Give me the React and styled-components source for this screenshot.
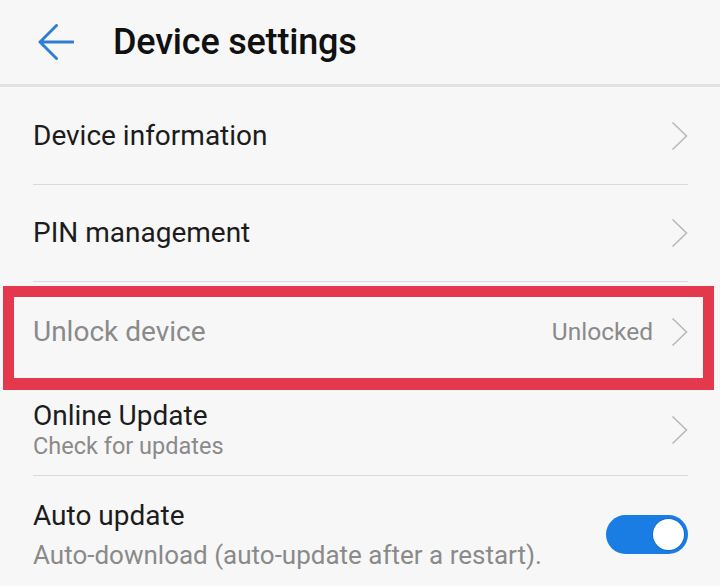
import React from 'react';
import styled, { createGlobalStyle } from 'styled-components';

const GlobalStyle = createGlobalStyle`
  html, body {
    margin: 0;
    padding: 0;
    background: #f7f7f7;
  }
  body {
    font-family: Roboto, "Noto Sans", "Liberation Sans", sans-serif;
    -webkit-font-smoothing: antialiased;
  }
`;

const StyledScreen = styled.div`
  width: 720px;
  height: 586px;
  overflow: hidden;
  background: #f7f7f7;
`;

const StyledHeader = styled.header`
  display: flex;
  align-items: center;
  height: 84px;
  padding-left: 38px;
  border-bottom: 3px solid #e2e2e2;
`;

const StyledBack = styled.button`
  display: flex;
  align-items: center;
  justify-content: center;
  width: 36px;
  height: 36px;
  padding: 0;
  border: 0;
  background: none;
  margin-right: 39px;
  cursor: pointer;
`;

const StyledTitle = styled.h1`
  margin: 0;
  font-size: 36px;
  font-weight: 500;
  color: #111;
  letter-spacing: -0.2px;
`;

const StyledRow = styled.div`
  display: flex;
  align-items: center;
  box-sizing: border-box;
  height: ${({ height }) => height}px;
  padding-top: ${({ top }) => top || 0}px;
  padding-bottom: ${({ bottom }) => bottom || 0}px;
  margin: 0 32px 0 33px;
  border-bottom: ${({ divider }) => (divider ? '1px solid #dadada' : 'none')};
`;

const StyledHighlight = styled.div`
  display: flex;
  align-items: center;
  height: 69px;
  margin: 4px 6px 0 3px;
  padding: 0 15px 12px 19px;
  border: 11px solid #e4384c;
  border-bottom-width: 12px;
`;

const StyledText = styled.div`
  flex: 1;
  display: flex;
  flex-direction: column;
  gap: ${({ gap }) => gap || 0}px;
`;

const StyledLabel = styled.div`
  font-size: 28px;
  line-height: 32px;
  color: ${({ muted }) => (muted ? '#8a8a8a' : '#1c1c1c')};
`;

const StyledSub = styled.div`
  font-size: ${({ size }) => size || 23.5}px;
  line-height: 28px;
  color: #8a8a8a;
`;

const StyledValue = styled.span`
  font-size: 24.5px;
  color: #8a8a8a;
  margin-right: 18px;
`;

const StyledChevron = styled.svg`
  flex: none;
  width: 17px;
  height: 30px;
`;

const StyledToggle = styled.div`
  flex: none;
  width: 82px;
  height: 39px;
  border-radius: 20px;
  background: #1a7de3;
  display: flex;
  align-items: center;
  justify-content: flex-end;
  padding-right: 4px;
  box-sizing: border-box;
`;

const StyledKnob = styled.div`
  width: 31px;
  height: 31px;
  border-radius: 50%;
  background: #fff;
  box-shadow: 0 0 0 1px rgba(0, 60, 140, 0.25);
`;

const Chevron = () => (
  <StyledChevron viewBox="0 0 17 30">
    <path d="M1.5 1.5 L15.5 15 L1.5 28.5" fill="none" stroke="#b9b9b9" strokeWidth="1.6" />
  </StyledChevron>
);

const BackArrow = () => (
  <svg width="36" height="36" viewBox="0 0 36 36">
    <path
      d="M35 18 H2 M18.5 1.5 L2 18 L18.5 34.5"
      fill="none"
      stroke="#2f7fd0"
      strokeWidth="3"
      strokeLinecap="round"
      strokeLinejoin="round"
    />
  </svg>
);

const App = () => (
  <StyledScreen>
    <GlobalStyle />
    <StyledHeader>
      <StyledBack aria-label="Back">
        <BackArrow />
      </StyledBack>
      <StyledTitle>Device settings</StyledTitle>
    </StyledHeader>

    <StyledRow height={98} divider>
      <StyledText>
        <StyledLabel>Device information</StyledLabel>
      </StyledText>
      <Chevron />
    </StyledRow>

    <StyledRow height={97} divider>
      <StyledText>
        <StyledLabel>PIN management</StyledLabel>
      </StyledText>
      <Chevron />
    </StyledRow>

    <StyledHighlight>
      <StyledText>
        <StyledLabel muted>Unlock device</StyledLabel>
      </StyledText>
      <StyledValue>Unlocked</StyledValue>
      <Chevron />
    </StyledHighlight>

    <StyledRow height={86} bottom={5} divider>
      <StyledText>
        <StyledLabel>Online Update</StyledLabel>
        <StyledSub>Check for updates</StyledSub>
      </StyledText>
      <Chevron />
    </StyledRow>

    <StyledRow height={110} top={6}>
      <StyledText gap={9}>
        <StyledLabel>Auto update</StyledLabel>
        <StyledSub size={26}>Auto-download (auto-update after a restart).</StyledSub>
      </StyledText>
      <StyledToggle>
        <StyledKnob />
      </StyledToggle>
    </StyledRow>
  </StyledScreen>
);

export default App;
